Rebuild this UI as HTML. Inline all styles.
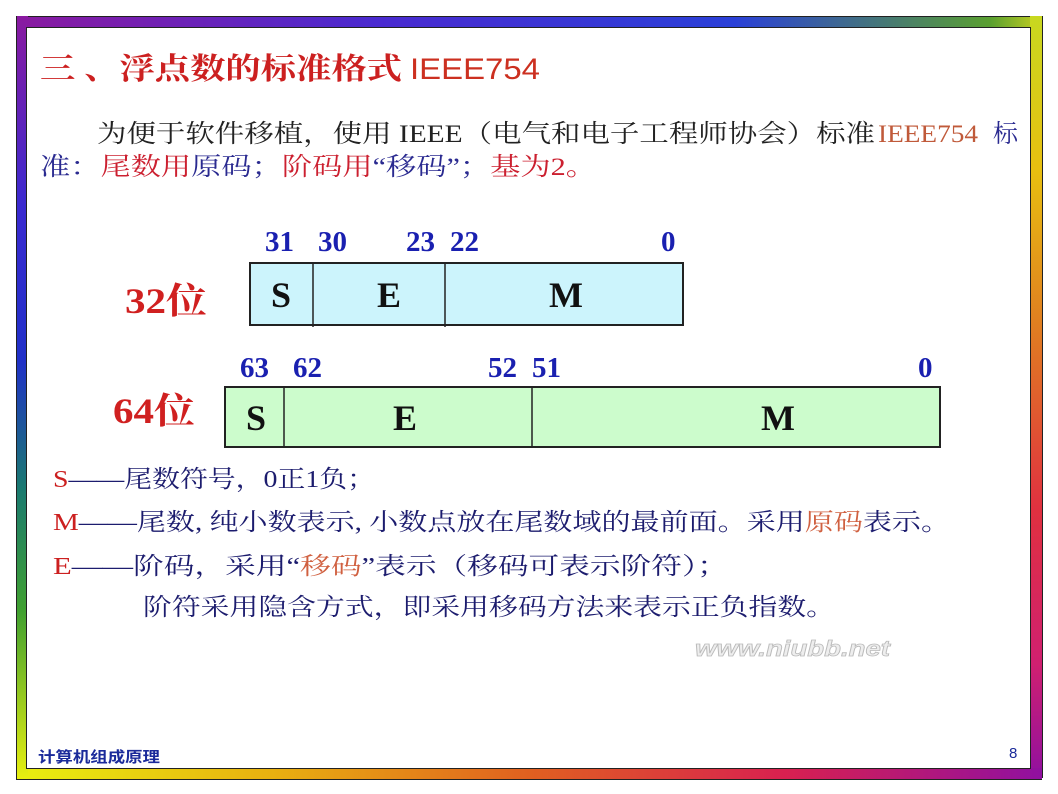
<!DOCTYPE html>
<html><head><meta charset="utf-8"><style>
html,body{margin:0;padding:0;background:#fff;}
body{width:1058px;height:794px;position:relative;overflow:hidden;}
.s{position:absolute;}
</style></head><body>
<div class="s" style="left:16px;top:16px;width:1026px;height:12px;background:linear-gradient(90deg,#8a1aa0,#4a2ad0 35%,#2a40d8 70%,#5aa030 95%,#c8d020);border-top:1px solid #222"></div>
<div class="s" style="left:1030px;top:16px;width:12px;height:762px;background:linear-gradient(180deg,#c8d820,#e8c010 20%,#e08020 40%,#e03040 65%,#d02070 85%,#9010a0);border-right:1px solid #222"></div>
<div class="s" style="left:16px;top:768px;width:1026px;height:11px;background:linear-gradient(90deg,#e8f010,#e8b010 25%,#e06020 50%,#d82050 75%,#9010a0);border-bottom:1px solid #222"></div>
<div class="s" style="left:16px;top:16px;width:11px;height:763px;background:linear-gradient(180deg,#8a1aa0,#3a2ad0 25%,#2030c8 45%,#1a7a70 62%,#40a030 78%,#e8f010);border-left:1px solid #222"></div>
<div class="s" style="left:26px;top:27px;width:1003px;height:740px;background:#fff;border:1px solid #222"></div>
<svg class="s" style="left:0;top:0" width="1058" height="794" xmlns="http://www.w3.org/2000/svg">
<g font-family="'Liberation Serif','Noto Serif CJK SC',serif">
<text x="40" y="79" font-size="30" fill="#cc2020" font-weight="bold" textLength="362" lengthAdjust="spacingAndGlyphs">三 、浮点数的标准格式</text>
<text x="410" y="79" font-size="30" fill="#cc3020" font-family="'Liberation Sans',sans-serif" textLength="130" lengthAdjust="spacingAndGlyphs">IEEE754</text>
<text x="97" y="142" font-size="25" fill="#222" textLength="778" lengthAdjust="spacingAndGlyphs">为便于软件移植，使用 IEEE（电气和电子工程师协会）标准</text>
<text x="878" y="142" font-size="25" fill="#c05a3a" textLength="100" lengthAdjust="spacingAndGlyphs">IEEE754</text>
<text x="993" y="142" font-size="25" fill="#2a2a90">标</text>
<text x="40" y="175" font-size="25" textLength="556" lengthAdjust="spacingAndGlyphs"><tspan fill="#2a2a90">准：</tspan><tspan fill="#cc2030">尾数用</tspan><tspan fill="#2a2a90">原码；</tspan><tspan fill="#cc2030">阶码用</tspan><tspan fill="#2a2a90">“移码”；</tspan><tspan fill="#cc2030">基为2。</tspan></text>
</g>
<rect x="250" y="263" width="433" height="62" fill="#ccf4fc" stroke="#222" stroke-width="2"/>
<line x1="313" y1="263" x2="313" y2="327" stroke="#222" stroke-width="1.5"/>
<line x1="445" y1="263" x2="445" y2="327" stroke="#222" stroke-width="1.5"/>
<rect x="225" y="387" width="715" height="60" fill="#ccfccc" stroke="#222" stroke-width="2"/>
<line x1="284" y1="387" x2="284" y2="447" stroke="#222" stroke-width="1.5"/>
<line x1="532" y1="387" x2="532" y2="447" stroke="#222" stroke-width="1.5"/>
<g font-family="'Liberation Serif',serif" font-weight="bold">
<g fill="#1a20b0" font-size="29">
<text x="265" y="251">31</text><text x="318" y="251">30</text><text x="406" y="251">23</text><text x="450" y="251">22</text><text x="661" y="251">0</text>
<text x="240" y="377">63</text><text x="293" y="377">62</text><text x="488" y="377">52</text><text x="532" y="377">51</text><text x="918" y="377">0</text>
</g>
<g fill="#111" font-size="36" text-anchor="middle">
<text x="281" y="307">S</text><text x="389" y="307">E</text><text x="566" y="307">M</text>
<text x="256" y="430">S</text><text x="405" y="430">E</text><text x="778" y="430">M</text>
</g>
<g fill="#d02020" font-size="36">
<text x="125" y="313" textLength="82" lengthAdjust="spacingAndGlyphs">32<tspan font-family="'Noto Serif CJK SC',serif">位</tspan></text>
<text x="113" y="423" textLength="82" lengthAdjust="spacingAndGlyphs">64<tspan font-family="'Noto Serif CJK SC',serif">位</tspan></text>
</g>
</g>
<g font-family="'Liberation Serif','Noto Serif CJK SC',serif" font-size="24" fill="#1c1c6e">
<text x="53" y="487" textLength="322" lengthAdjust="spacingAndGlyphs"><tspan fill="#cc2020">S</tspan>——尾数符号，0正1负；</text>
<text x="53" y="530" textLength="897" lengthAdjust="spacingAndGlyphs"><tspan fill="#cc2020">M</tspan>——尾数, 纯小数表示, 小数点放在尾数域的最前面。采用<tspan fill="#d06040">原码</tspan>表示。</text>
<text x="53" y="574" textLength="675" lengthAdjust="spacingAndGlyphs"><tspan fill="#cc2020">E</tspan>——阶码，采用“<tspan fill="#d06040">移码</tspan>”表示（移码可表示阶符）；</text>
<text x="143" y="615" textLength="692" lengthAdjust="spacingAndGlyphs">阶符采用隐含方式，即采用移码方法来表示正负指数。</text>
</g>
<text x="695" y="656" font-family="'Liberation Sans',sans-serif" font-size="22" font-style="italic" font-weight="bold" fill="#eee" stroke="#bbb" stroke-width="0.8" textLength="195" lengthAdjust="spacingAndGlyphs">www.niubb.net</text>
<text x="38" y="762" font-family="'Liberation Sans','Noto Sans CJK SC',sans-serif" font-size="15" font-weight="bold" fill="#1a2a9a" textLength="122" lengthAdjust="spacingAndGlyphs">计算机组成原理</text>
<text x="1009" y="758" font-family="'Liberation Sans',sans-serif" font-size="15" fill="#1a2a9a">8</text>
</svg>
</body></html>
